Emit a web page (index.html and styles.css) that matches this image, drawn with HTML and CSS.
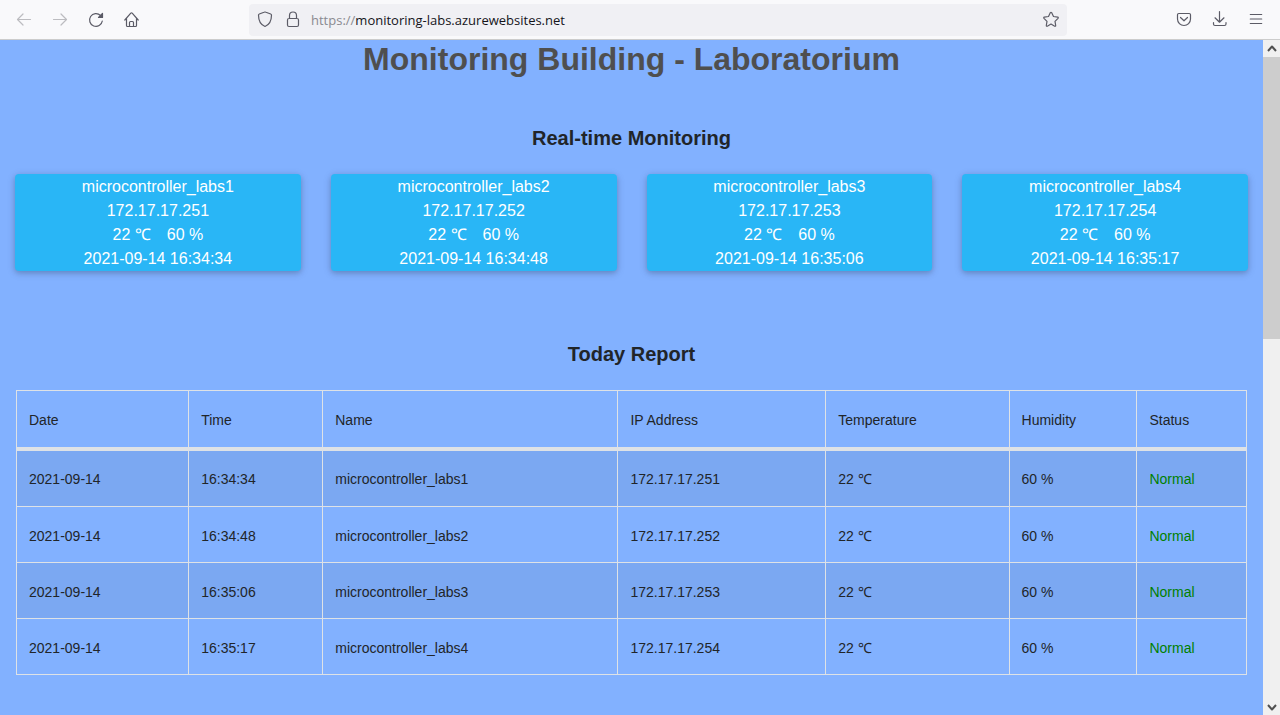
FILE: index.html
```html
<!DOCTYPE html>
<html lang="en">
<head>
<meta charset="utf-8">
<title>Monitoring Building - Laboratorium</title>
<link rel="stylesheet" href="styles.css">
</head>
<body>
<header class="toolbar">
  <nav class="nav-buttons" aria-label="Browser navigation">
    <button class="icon-button faded" aria-label="Back"><svg viewBox="0 0 16 16"><path d="M14.500 7.500H1.500M7 2L1.500 7.500L7 13"/></svg></button>
    <button class="icon-button faded" aria-label="Forward"><svg viewBox="0 0 16 16"><path d="M1.500 7.500h13M9 2l5.500 5.500L9 13"/></svg></button>
    <button class="icon-button" aria-label="Reload"><svg viewBox="0 0 16 16"><path d="M12.500 3.500A6.400 6.400 0 1 0 14.300 9"/><path class="solid" d="M14.500 1.500v4h-4z"/></svg></button>
    <button class="icon-button" aria-label="Home"><svg viewBox="0 0 16 16"><path d="M.8 8L6.800 1.200q.7-.7 1.400 0L14.200 8M2.500 6.500v7q0 1 1 1h8q1 0 1-1v-7M5.500 14.500v-4q0-1 1-1h2q1 0 1 1v4"/></svg></button>
  </nav>
  <div class="address-bar">
    <div class="site-info">
      <button class="icon-button" aria-label="Tracking protection"><svg viewBox="0 0 16 16"><path d="M8 0q.5 0 1 .3l4.700 1.700q.8.300.8 1.100C14.500 9 12.500 12.800 8 14.500C3.500 12.800 1.500 9 1.500 3.100q0-.8.800-1.100L7 .3q.5-.3 1-.3z"/></svg></button>
      <button class="icon-button" aria-label="Connection secure"><svg viewBox="0 0 16 16"><path d="M4.500 6.500V3.500a3.500 3.500 0 0 1 7 0v3M2.500 8q0-1.500 1.500-1.500h8q1.500 0 1.500 1.500v5q0 1.500-1.500 1.500H4q-1.500 0-1.500-1.500z"/></svg></button>
    </div>
    <a class="url" href="#report"><span class="scheme">https://</span>monitoring-labs.azurewebsites.net</a>
    <button class="icon-button" aria-label="Bookmark"><svg viewBox="0 0 16 16"><path d="M7.300 .7q.7-.9 1.400 0L10.500 4.500l4.200.6q1 .3.300 1.200L12 9.300l.7 4.200q0 1-1 .7L8 12.100l-3.700 2.100q-1 .3-1-.7L4 9.300 1 6.300q-.7-.9.300-1.200L5.500 4.500z"/></svg></button>
  </div>
  <div class="tools">
    <button class="icon-button" aria-label="Save to Pocket"><svg viewBox="0 0 16 16"><path d="M2.800 1.500h10.400q1.300 0 1.300 1.300V7A6.500 6.500 0 0 1 1.500 7V2.800Q1.500 1.500 2.800 1.500zM4.500 5.500L8 8.800l3.500-3.300"/></svg></button>
    <button class="icon-button" aria-label="Downloads"><svg viewBox="0 0 16 16"><path d="M7.500-.5v10.500M3 5.800L7.500 10.200L12 5.800M1.500 10.500V12q0 1.500 1.500 1.500h9.500q1.500 0 1.500-1.500v-1.500"/></svg></button>
    <button class="icon-button" aria-label="Menu"><svg viewBox="0 0 16 16"><path d="M2.300 2.500h11.400M2.300 7h11.400M2.300 11.500h11.400"/></svg></button>
  </div>
</header>
<div class="viewport">
  <main class="page">
    <h1>Monitoring Building - Laboratorium</h1>
    <section>
      <h2>Real-time Monitoring</h2>
      <div class="cards">
        <article class="card"><p>microcontroller_labs1</p><p>172.17.17.251</p><p class="readings"><span>22 ℃</span><span>60 %</span></p><p>2021-09-14 16:34:34</p></article>
        <article class="card"><p>microcontroller_labs2</p><p>172.17.17.252</p><p class="readings"><span>22 ℃</span><span>60 %</span></p><p>2021-09-14 16:34:48</p></article>
        <article class="card"><p>microcontroller_labs3</p><p>172.17.17.253</p><p class="readings"><span>22 ℃</span><span>60 %</span></p><p>2021-09-14 16:35:06</p></article>
        <article class="card"><p>microcontroller_labs4</p><p>172.17.17.254</p><p class="readings"><span>22 ℃</span><span>60 %</span></p><p>2021-09-14 16:35:17</p></article>
      </div>
    </section>
    <section class="report" id="report">
      <h2>Today Report</h2>
      <table>
        <colgroup><col class="w-date"><col class="w-time"><col class="w-name"><col class="w-ip"><col class="w-temp"><col class="w-humidity"><col class="w-status"></colgroup>
        <thead>
          <tr><th>Date</th><th>Time</th><th>Name</th><th>IP Address</th><th>Temperature</th><th>Humidity</th><th>Status</th></tr>
        </thead>
        <tbody>
          <tr><td>2021-09-14</td><td>16:34:34</td><td>microcontroller_labs1</td><td>172.17.17.251</td><td>22 ℃</td><td>60 %</td><td class="normal">Normal</td></tr>
          <tr><td>2021-09-14</td><td>16:34:48</td><td>microcontroller_labs2</td><td>172.17.17.252</td><td>22 ℃</td><td>60 %</td><td class="normal">Normal</td></tr>
          <tr><td>2021-09-14</td><td>16:35:06</td><td>microcontroller_labs3</td><td>172.17.17.253</td><td>22 ℃</td><td>60 %</td><td class="normal">Normal</td></tr>
          <tr><td>2021-09-14</td><td>16:35:17</td><td>microcontroller_labs4</td><td>172.17.17.254</td><td>22 ℃</td><td>60 %</td><td class="normal">Normal</td></tr>
        </tbody>
      </table>
    </section>
  </main>
  <div class="scrollbar">
    <button class="scroll-arrow" aria-label="Scroll up"><svg viewBox="0 0 10 10"><path d="M1 7L5 2.500L9 7"/></svg></button>
    <div class="track"><div class="thumb"></div></div>
    <button class="scroll-arrow" aria-label="Scroll down"><svg viewBox="0 0 10 10"><path d="M1 3L5 7.500L9 3"/></svg></button>
  </div>
</div>
</body>
</html>
```

FILE: styles.css
```css
* { box-sizing: border-box; }

body {
  margin: 0;
  height: 100vh;
  display: flex;
  flex-direction: column;
  font-family: "Liberation Sans", "Open Sans", sans-serif;
  color: #212529;
}

h1, h2, p { margin: 0; }

/* Browser toolbar */
.toolbar {
  flex: none;
  display: flex;
  align-items: center;
  height: 40px;
  padding: 0 16px;
  background: #f9f9fb;
  border-bottom: 1px solid #cccccc;
}

.nav-buttons { display: flex; gap: 20px; }

.icon-button {
  flex: none;
  width: 16px;
  height: 16px;
  padding: 0;
  border: 0;
  background: none;
  color: #5b5b66;
}

.icon-button svg { display: block; width: 16px; height: 16px; overflow: visible; }

svg path {
  fill: none;
  stroke: currentColor;
  stroke-width: 1.2;
  stroke-linecap: round;
  stroke-linejoin: round;
}

svg .solid { fill: currentColor; }

.faded { color: #bcbcc0; }

.address-bar {
  flex: 1;
  display: flex;
  align-items: center;
  gap: 10px;
  height: 32px;
  margin: 0 109px;
  padding: 0 8px;
  border-radius: 4px;
  background: #f0f0f4;
}

.site-info { display: flex; gap: 12px; }

.url {
  flex: 1;
  font: 13px/20px "Open Sans", "Noto Sans", sans-serif;
  color: #15141a;
  text-decoration: none;
}

.scheme { color: #8a8a90; }

.tools { display: flex; gap: 20px; }

/* Page area and its scrollbar */
.viewport { flex: 1; min-height: 0; display: flex; }

.page {
  flex: 1;
  overflow: hidden;
  background: #82b1ff;
}

h1 {
  font-size: 32px;
  line-height: 38px;
  text-align: center;
  color: #4f4f4f;
}

h2 {
  font-size: 20px;
  line-height: 24px;
  text-align: center;
}

section { padding: 48px 15px 0; }

.report { padding: 71px 16px 0; }

.cards {
  display: grid;
  grid-template-columns: repeat(4, 1fr);
  gap: 30px;
  margin-top: 24px;
}

.card {
  padding-top: 1px;
  border-radius: 4px;
  background: #29b6f6;
  box-shadow: 0 2px 5px rgba(0, 0, 0, 0.16), 0 2px 10px rgba(0, 0, 0, 0.12);
  font-size: 16px;
  line-height: 24px;
  text-align: center;
  color: #ffffff;
}

.readings { display: flex; justify-content: center; gap: 16px; }

/* Report table */
table {
  width: 100%;
  margin-top: 24px;
  border-collapse: collapse;
  table-layout: fixed;
  font-size: 14px;
  line-height: 20px;
}

th, td {
  height: 56px;
  padding: 2px 12px 0;
  border: 1px solid #dee2e6;
  font-weight: 400;
  text-align: left;
}

thead th { height: 58px; padding-top: 3px; border-bottom: 4px solid #dee2e6; }

tbody tr:nth-child(odd) { background: rgba(0, 0, 0, 0.05); }

tbody tr:first-child td { height: 58px; padding-top: 1px; }

.w-date { width: 14%; }
.w-time { width: 10.9%; }
.w-name { width: 24%; }
.w-ip { width: 16.9%; }
.w-temp { width: 14.9%; }
.w-humidity { width: 10.4%; }
.w-status { width: 8.9%; }

.normal { color: #008000; }

.scrollbar {
  flex: none;
  display: flex;
  flex-direction: column;
  width: 17px;
  background: #f0f0f0;
}

.scroll-arrow {
  display: grid;
  place-items: center;
  height: 17px;
  padding: 0;
  border: 0;
  background: none;
  color: #505050;
}

.scroll-arrow svg { width: 10px; height: 10px; }

.scroll-arrow path { stroke-width: 2; stroke-linecap: butt; }

.track { flex: 1; }

.thumb { height: 44%; background: #cdcdcd; }
```
